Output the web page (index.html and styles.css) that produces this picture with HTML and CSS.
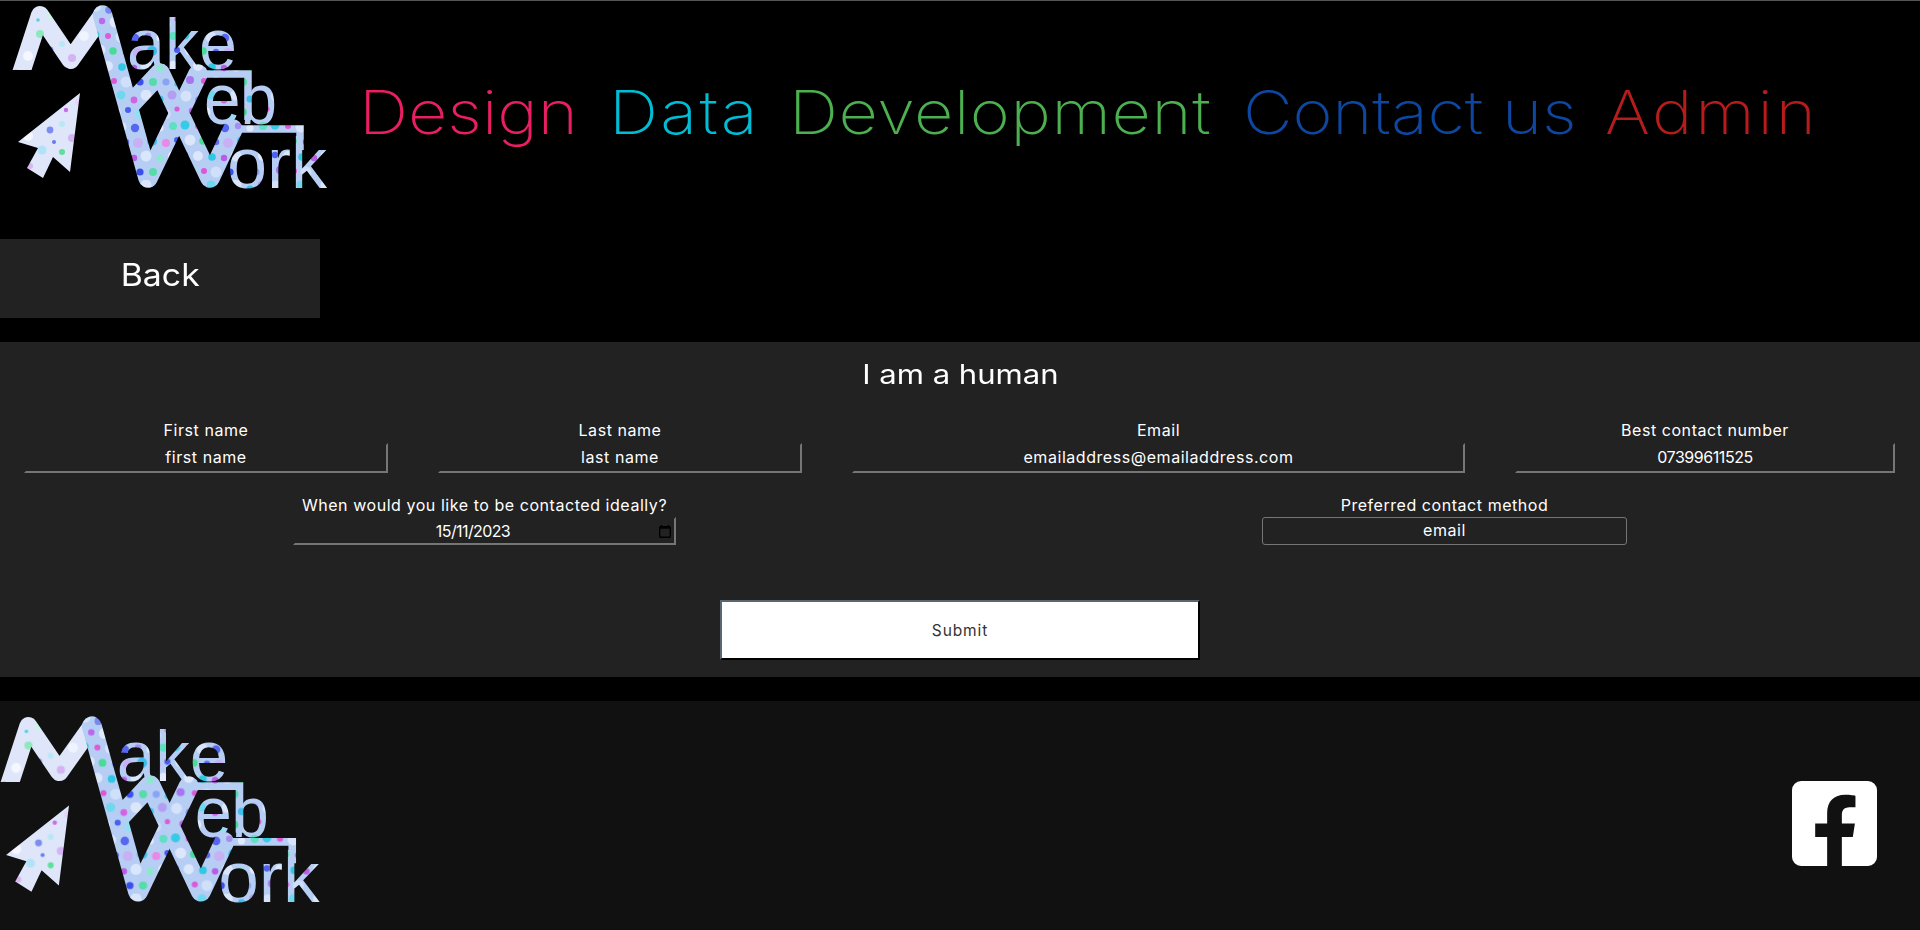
FILE: index.html
```html
<!DOCTYPE html>
<html lang="en">
<head>
<meta charset="utf-8">
<title>Make Web Work</title>
<link rel="stylesheet" href="styles.css">
</head>
<body>
<svg class="defs" width="0" height="0" aria-hidden="true">
  <defs>
    <filter id="soft" x="-5%" y="-5%" width="110%" height="110%"><feGaussianBlur stdDeviation="0.4"/></filter>
    <pattern id="pale" width="90" height="80" patternUnits="userSpaceOnUse">
      <rect width="90" height="80" fill="#dfe6fa"/>
      <circle cx="8" cy="10" r="5" fill="#c4e4f6"/><circle cx="30" cy="6" r="3" fill="#dcb4f3"/>
      <circle cx="52" cy="14" r="6" fill="#cff1ea"/><circle cx="74" cy="8" r="2.8" fill="#8b9ef2"/>
      <circle cx="18" cy="30" r="3.5" fill="#f6f8ff"/><circle cx="40" cy="34" r="4" fill="#8ee8bd"/>
      <circle cx="66" cy="30" r="2.2" fill="#c56ee8"/><circle cx="84" cy="36" r="5" fill="#f0f4ff"/>
      <circle cx="6" cy="52" r="3.2" fill="#6fd8ee"/><circle cx="28" cy="56" r="5" fill="#f4f7ff"/>
      <circle cx="50" cy="50" r="3.4" fill="#7b8cf0"/><circle cx="72" cy="58" r="4" fill="#d4b4f3"/>
      <circle cx="16" cy="72" r="2.4" fill="#e285e6"/><circle cx="42" cy="70" r="4.5" fill="#b0e2f8"/>
      <circle cx="62" cy="72" r="3" fill="#5fdf9c"/><circle cx="86" cy="70" r="3" fill="#94b4f4"/>
      <circle cx="20" cy="18" r="2" fill="#a87cf0"/><circle cx="62" cy="44" r="3" fill="#b8e8f6"/>
      <circle cx="38" cy="20" r="1.8" fill="#56d0ea"/><circle cx="78" cy="22" r="3" fill="#e8d4f8"/>
      <circle cx="10" cy="38" r="2.2" fill="#d8a2ef"/><circle cx="54" cy="62" r="2" fill="#6878ee"/>
    </pattern>
    <pattern id="dense" width="90" height="90" patternUnits="userSpaceOnUse">
      <rect width="90" height="90" fill="#b6cdf4"/>
      <circle cx="6" cy="6" r="5.5" fill="#d4e2fa"/><circle cx="19" cy="10" r="3.8" fill="#7888f0"/>
      <circle cx="31" cy="5" r="4.5" fill="#70d8ee"/><circle cx="44" cy="10" r="3.4" fill="#d264e6"/>
      <circle cx="56" cy="5" r="5.5" fill="#dbe6fb"/><circle cx="70" cy="9" r="3.6" fill="#3fbfee"/>
      <circle cx="82" cy="5" r="4.5" fill="#b49ef2"/><circle cx="12" cy="21" r="3.2" fill="#bc68ee"/>
      <circle cx="25" cy="22" r="5.5" fill="#e2ebfd"/><circle cx="38" cy="20" r="3" fill="#4a5eee"/>
      <circle cx="50" cy="24" r="5" fill="#8fe0f4"/><circle cx="63" cy="22" r="3.8" fill="#42da90"/>
      <circle cx="76" cy="24" r="5" fill="#cddcf9"/><circle cx="87" cy="19" r="2.6" fill="#dc5cd8"/>
      <circle cx="5" cy="35" r="4.5" fill="#36cbe4"/><circle cx="18" cy="36" r="3" fill="#dc5cd8"/>
      <circle cx="31" cy="37" r="5.5" fill="#d8e4fb"/><circle cx="45" cy="38" r="4.2" fill="#5666f0"/>
      <circle cx="58" cy="36" r="3.2" fill="#a48ef2"/><circle cx="70" cy="38" r="3.6" fill="#e2eafd"/>
      <circle cx="83" cy="36" r="4" fill="#5ee0c2"/><circle cx="10" cy="50" r="5.5" fill="#dce7fb"/>
      <circle cx="23" cy="51" r="3.8" fill="#4adc98"/><circle cx="36" cy="52" r="3.2" fill="#6468ee"/>
      <circle cx="48" cy="53" r="5" fill="#c8b0f5"/><circle cx="62" cy="51" r="5" fill="#38bcec"/>
      <circle cx="76" cy="53" r="4" fill="#ea88e8"/><circle cx="87" cy="50" r="3" fill="#4a58ee"/>
      <circle cx="5" cy="65" r="3.2" fill="#4e60ee"/><circle cx="18" cy="66" r="5" fill="#dce7fb"/>
      <circle cx="32" cy="67" r="3.8" fill="#2ec8e2"/><circle cx="44" cy="68" r="3.2" fill="#ba5ce6"/>
      <circle cx="56" cy="66" r="5.5" fill="#dae6fc"/><circle cx="70" cy="68" r="3.6" fill="#8ce8cc"/>
      <circle cx="83" cy="66" r="5" fill="#e4ebfe"/><circle cx="10" cy="80" r="4" fill="#a874f0"/>
      <circle cx="24" cy="81" r="3" fill="#dc58d8"/><circle cx="36" cy="82" r="5.5" fill="#d0e0fa"/>
      <circle cx="50" cy="82" r="3.6" fill="#3a50ec"/><circle cx="63" cy="82" r="4" fill="#54dca8"/>
      <circle cx="76" cy="82" r="3.6" fill="#8aa4f4"/><circle cx="87" cy="84" r="2.6" fill="#36cbe4"/>
    </pattern>
    <clipPath id="legcut"><rect x="0" y="0" width="340" height="70"/></clipPath>
    <symbol id="logo" viewBox="0 0 340 200" overflow="visible">
      <g filter="url(#soft)">
        <path class="zig-pale" clip-path="url(#legcut)" d="M17.5 84 L40 15 L70.5 60 L102.5 15"/>
        <path class="zig" d="M102.5 15 L148 178 L198 74"/>
        <path class="zig" d="M130 105 L160 73 L210 178 L233 129"/>
        <path class="thin" d="M196 74 H248 V120"/>
        <path class="thin" d="M230 129 H300 V150"/>
        <polygon class="fill-pale" points="80,93 70,172 53,157 43,178 27,168 38,148 18,142"/>
        <text class="logo-text" x="127" y="69" textLength="110" lengthAdjust="spacingAndGlyphs">ake</text>
        <text class="logo-text" x="204" y="124" textLength="73" lengthAdjust="spacingAndGlyphs">eb</text>
        <text class="logo-text" x="227" y="188" textLength="100" lengthAdjust="spacingAndGlyphs">ork</text>
      </g>
    </symbol>
  </defs>
</svg>

<header class="site-header">
  <a class="brand" href="#" aria-label="Make Web Work">
    <svg class="logo-header" viewBox="0 1 340 200" width="340" height="200"><use href="#logo" width="340" height="200"/></svg>
  </a>
  <nav class="main-nav">
    <a class="nav-link design" href="#">Design</a>
    <a class="nav-link data" href="#">Data</a>
    <a class="nav-link dev" href="#">Development</a>
    <a class="nav-link contact" href="#">Contact us</a>
    <a class="nav-link admin" href="#">Admin</a>
  </nav>
</header>

<a class="back" href="#"><span class="back-label">Back</span></a>

<main class="panel">
  <h1 class="panel-title"><span class="panel-title-text">I am a human</span></h1>
  <form class="contact-form">
    <div class="row-four">
      <label class="field"><span class="field-label">First name</span><input class="text-input" type="text" value="first name"></label>
      <label class="field"><span class="field-label">Last name</span><input class="text-input" type="text" value="last name"></label>
      <label class="field"><span class="field-label">Email</span><input class="text-input" type="text" value="emailaddress@emailaddress.com"></label>
      <label class="field"><span class="field-label">Best contact number</span><input class="text-input numeric" type="text" value="07399611525"></label>
    </div>
    <div class="row-two">
      <label class="field field-date">
        <span class="field-label">When would you like to be contacted ideally?</span>
        <span class="date-box">
          <input class="date-input numeric" type="text" value="15/11/2023">
          <svg class="cal" viewBox="0 0 12 13" width="12" height="13" aria-hidden="true"><path d="M2.5 0v1.5M9.5 0v1.5" stroke="#000" stroke-width="1.4" fill="none"/><rect x=".7" y="1.7" width="10.6" height="10.6" rx="1" fill="none" stroke="#000" stroke-width="1.4"/><rect x="1" y="1.5" width="10" height="2.2" fill="#000"/></svg>
        </span>
      </label>
      <label class="field field-select">
        <span class="field-label">Preferred contact method</span>
        <select class="select-input"><option>email</option></select>
      </label>
    </div>
    <button class="submit" type="button">Submit</button>
  </form>
</main>

<footer class="site-footer">
  <a class="brand" href="#" aria-label="Make Web Work">
    <svg class="logo-footer" viewBox="12 0 340 200" width="345" height="203"><use href="#logo" width="340" height="200"/></svg>
  </a>
  <a class="fb" href="#" aria-label="Facebook">
    <svg viewBox="0 32 448 448" width="85" height="85"><path fill="#fff" d="M400 32H48A48 48 0 0 0 0 80v352a48 48 0 0 0 48 48h137.25V327.69h-63V256h63v-54.64c0-62.15 37-96.48 93.67-96.48 27.14 0 55.52 4.84 55.52 4.84v61h-31.27c-30.81 0-40.42 19.12-40.42 38.73V256h68.78l-11 71.69h-57.78V480H400a48 48 0 0 0 48-48V80a48 48 0 0 0-48-48z"/></svg>
  </a>
</footer>
</body>
</html>
```
FILE: styles.css
```css
* { box-sizing: border-box; }
html, body { margin: 0; padding: 0; }
body {
  background: #000;
  color: #fff;
  font-family: Inter, "Open Sans", "Liberation Sans", sans-serif;
  border-top: 1px solid #555;
  height: 930px;
  overflow: hidden;
}
a { text-decoration: none; color: inherit; }
.defs { position: absolute; }

.zig, .zig-pale { fill: none; stroke-linejoin: round; stroke-linecap: round; }
.zig { stroke: url(#dense); stroke-width: 19.5; }
.zig-pale { stroke: url(#pale); stroke-width: 18; stroke-linecap: butt; }
.thin { fill: none; stroke: url(#dense); stroke-width: 7.5; }
.fill-pale { fill: url(#pale); }
.logo-text { font-family: "Liberation Sans", Arial, sans-serif; font-size: 72px; fill: url(#dense); }

.site-header { display: flex; height: 238px; }
.brand { display: block; flex: none; line-height: 0; }
.main-nav { display: flex; padding: 73px 0 0 19px; height: 149px; }
.nav-link { font-size: 60px; font-weight: 250; line-height: 76px; white-space: nowrap; transform: scaleX(1.14); transform-origin: left center; }
.design { color: #e91e63; letter-spacing: 0; margin-right: 58px; }
.data { color: #00bcd4; letter-spacing: 2.07px; margin-right: 48px; }
.dev { color: #4caf50; letter-spacing: .49px; margin-right: 83px; }
.contact { color: #0d47a1; letter-spacing: -.16px; margin-right: 70px; }
.admin { color: #b71c1c; letter-spacing: 2.46px; }

.back {
  display: flex; align-items: center; justify-content: center;
  width: 320px; height: 79px; padding-bottom: 9px;
  background: #222; font-size: 31px; font-weight: 400;
}
.back-label { transform: scaleX(1.09); }

.panel { margin-top: 24px; background: #222; height: 335px; }
.panel-title { display: flex; justify-content: center; margin: 0; height: 66px; line-height: 66px; font-size: 27px; font-weight: 400; }
.panel-title-text { transform: scaleX(1.15); }

.row-four {
  display: grid;
  grid-template-columns: 364px 364px 613px 380px;
  column-gap: 50px;
  padding: 12px 25px 0 24px;
}
.row-two { display: flex; justify-content: space-around; margin-top: 22px; }
.field { display: flex; flex-direction: column; align-items: stretch; }
.field-date { width: 383px; }
.field-select { width: 365px; }
.field-label { height: 20px; line-height: 20px; margin-bottom: 3px; font-size: 16px; text-align: center; letter-spacing: .55px; white-space: nowrap; }
.row-two .field-label { margin-bottom: 2px; }
.text-input, .date-box {
  height: 30px; background: transparent; color: #fff;
  border: solid transparent; border-width: 2px;
  border-right-color: #767676; border-bottom-color: #767676;
}
.text-input { width: 100%; padding: 0 0 2px; font: inherit; font-size: 16px; text-align: center; letter-spacing: .55px; outline: 0; }
.date-box { display: flex; align-items: center; height: 28px; padding-right: 3px; }
.date-input { flex: 1; min-width: 0; padding: 0 8px 0 0; background: transparent; border: 0; color: #fff; font: inherit; font-size: 16px; text-align: center; outline: 0; }
.text-input.numeric { letter-spacing: -.45px; }
.date-input.numeric { letter-spacing: -.6px; }
.cal { flex: none; }
.select-input {
  appearance: none; height: 28px; width: 100%; padding: 0 0 2px;
  background: #222; color: #fff; border: 1px solid #767676; border-radius: 3px;
  font: inherit; font-size: 16px; text-align: center; letter-spacing: .55px;
}

.submit {
  display: block; width: 480px; height: 60px; margin: 55px auto 0;
  background: #fff; color: #333;
  border: 2px solid; border-color: #5b6770 #000 #000 #5b6770;
  font: inherit; font-size: 15.5px; letter-spacing: .9px;
}

.site-footer {
  margin-top: 24px; height: 229px; background: #111;
  display: flex; justify-content: space-between;
  padding: 10px 43px 0 0;
}
.fb { display: block; margin-top: 70px; line-height: 0; }
```
